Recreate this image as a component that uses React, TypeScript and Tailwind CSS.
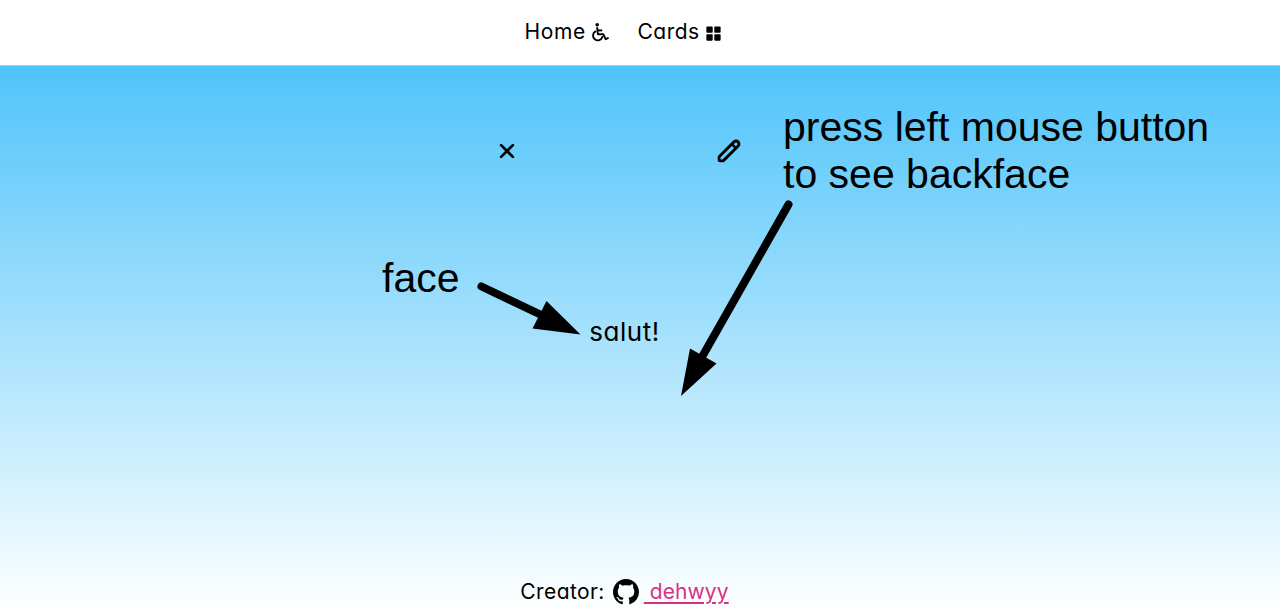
import React from "react";
import { BiSolidGridAlt } from "react-icons/bi";
import { BsGithub } from "react-icons/bs";

function WheelchairIcon() {
  return (
    <svg width="20" height="22" viewBox="0 0 20 22" fill="none" stroke="currentColor" strokeWidth="1.9" strokeLinecap="round" strokeLinejoin="round">
      <circle cx="6.2" cy="3.8" r="1.8" fill="currentColor" stroke="none" />
      <path d="M6.2 7 6.9 13.2h5.400l2.300 5 2.300-1.100" />
      <path d="M6.700 9.400h4.500" strokeLinecap="butt" />
      <path d="M4.400 10.400a4.800 4.800 0 1 0 7 5.600" />
    </svg>
  );
}

function CrossIcon() {
  return (
    <svg width="16" height="16" viewBox="0 0 16 16" stroke="currentColor" strokeWidth="2.7" strokeLinecap="round">
      <path d="m2.1 2.1 11.8 11.8M13.9 2.1 2.1 13.9" />
    </svg>
  );
}

function PencilIcon() {
  return (
    <svg width="24" height="24" viewBox="0 0 24 24" fill="none" stroke="currentColor" strokeWidth="2.9" strokeLinecap="round" strokeLinejoin="round">
      <path d="M2.6 17.300 17 2.900a2.900 2.900 0 0 1 4.100 0 2.900 2.900 0 0 1 0 4.100L6.700 21.400c-.3.3-.7.500-1.100.500H3.100c-.6 0-1-.4-1-1v-2.500c0-.4.2-.8.5-1.100z" />
      <path d="m15.200 5.400 3.400 3.400" strokeWidth="2.4" />
    </svg>
  );
}

function Header() {
  return (
    <header className="flex h-[66px] shrink-0 justify-center border-b border-[#9fd3ee] bg-white pr-[33px]">
      <nav className="flex items-center gap-[27px] pb-px">
        <a className="flex items-center gap-1">
          <span className="w-[62px] tracking-[0.6px]">Home</span>
          <WheelchairIcon />
        </a>
        <a className="flex items-center gap-1">
          <span className="w-[62px] tracking-[0.5px]">Cards</span>
          <BiSolidGridAlt className="mt-0.5 size-[19px]" />
        </a>
      </nav>
    </header>
  );
}

function Card() {
  return (
    <section className="mx-auto mt-[73px] flex w-[252px] flex-col">
      <div className="flex h-6 w-[242px] items-center justify-between">
        <CrossIcon />
        <PencilIcon />
      </div>
      <p className="mt-[149px] text-center text-[26px] leading-10 tracking-[0.5px]">salut!</p>
    </section>
  );
}

function Footer() {
  return (
    <footer className="mt-auto flex h-[39px] items-center justify-center">
      <span className="mr-2 tracking-[0.4px]">Creator:</span>
      <BsGithub className="mr-[5px] size-[26px]" />
      <a className="whitespace-pre text-[#d63384] underline decoration-2 underline-offset-[3px] tracking-[0.1px]"> dehwyy</a>
    </footer>
  );
}

function Annotations() {
  return (
    <div className="pointer-events-none absolute inset-0 font-['Liberation_Sans',Arial,sans-serif] text-[41px] leading-[47px] font-normal">
      <p className="absolute top-[104px] left-[783px] whitespace-nowrap">
        press left mouse button
        <br />
        to see backface
      </p>
      <p className="absolute top-[255px] left-[382px]">face</p>
      <svg className="absolute inset-0" width="1280" height="611" viewBox="0 0 1280 611" stroke="#000" strokeWidth="8" strokeLinecap="round">
        <path d="m481.5 286.5 63 30M788.500 204.500 702 357" />
        <path d="m546.500 301 34 33.500-48-6zM690 348.500l26.500 15-35.500 32.500z" stroke="none" />
      </svg>
    </div>
  );
}

export default function App() {
  return (
    <div className="relative flex h-[611px] w-full flex-col overflow-hidden font-['Inter',sans-serif] text-[21px] leading-[30px] font-normal text-black [font-feature-settings:'cv11']">
      <Header />
      <main className="flex flex-1 flex-col bg-linear-to-b/srgb from-[#4fc4fa] to-white pr-[31px]">
        <Card />
        <Footer />
      </main>
      <Annotations />
    </div>
  );
}
